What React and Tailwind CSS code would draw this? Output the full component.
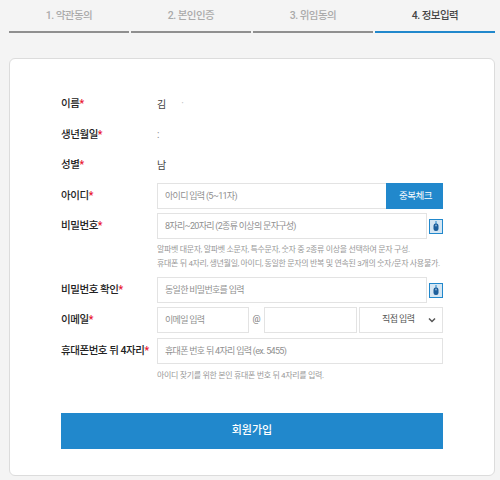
import React from 'react'

function Label({ text }) {
  return (
    <div className="w-[96px] shrink-0 text-[10.5px] tracking-[-0.45px] text-[#222] font-medium whitespace-nowrap">
      {text}
      <span className="text-[#e8102a]">*</span>
    </div>
  )
}

function TextInput({ placeholder, className = '' }) {
  return (
    <input
      placeholder={placeholder}
      className={`h-[26px] min-w-0 border border-[#e3e3e3] bg-white px-[7px] text-[9px] tracking-[-0.7px] outline-none placeholder:text-[#909090] ${className}`}
    />
  )
}

function MouseBtn() {
  return (
    <div className="ml-[2px] flex h-[15px] w-[14px] shrink-0 items-center justify-center border border-[#2188cc] bg-[#d5e6f3]">
      <svg width="8" height="11" viewBox="0 0 8 11">
        <path d="M4 0v3" stroke="#2188cc" strokeWidth="1" />
        <rect x="1.5" y="2.5" width="5" height="7.5" rx="2.2" fill="#1d5f9c" />
        <rect x="3.5" y="3.7" width="1" height="1.6" fill="#cfe3f3" />
      </svg>
    </div>
  )
}

export default function App() {
  const steps = ['1. 약관동의', '2. 본인인증', '3. 위임동의', '4. 정보입력']
  return (
    <div className="h-[480px] w-[500px] overflow-hidden bg-[#f4f4f4] px-[9px] pt-[6px] font-['Roboto','Noto_Sans_CJK_KR',sans-serif]">
      <div className="flex w-[486px] gap-[2px]">
        {steps.map((s, i) => (
          <div
            key={s}
            className={`h-[27px] w-[120.5px] border-b-[2px] pt-[2px] text-center text-[10.5px] font-medium leading-[15px] tracking-[-0.55px] ${
              i === 3 ? 'border-[#2188cc] text-[#444]' : 'border-[#8f8f8f] text-[#aaa]'
            }`}
          >
            {s}
          </div>
        ))}
      </div>

      <div className="mt-[25px] h-[418px] w-[486px] rounded-[6px] border border-[#dcdcdc] bg-white px-[51px] pt-[30px]">
        <div className="flex h-[30px] items-center">
          <Label text="이름" />
          <span className="text-[10px] text-[#444]">김</span>
          <span className="ml-[15px] text-[10px] leading-none text-[#bbb]">·</span>
        </div>
        <div className="flex h-[31px] items-center">
          <Label text="생년월일" />
          <span className="text-[10px] text-[#888]">:</span>
        </div>
        <div className="flex h-[30px] items-center">
          <Label text="성별" />
          <span className="text-[10px] text-[#444]">남</span>
        </div>

        <div className="mt-[3px] flex h-[26px] items-center">
          <Label text="아이디" />
          <TextInput placeholder="아이디 입력 (5~11자)" className="flex-1 border-r-0" />
          <button className="h-[26px] w-[57px] bg-[#2188cc] pl-[2px] text-[9.5px] tracking-[-0.5px] text-white">중복체크</button>
        </div>

        <div className="mt-[4px] flex h-[26px] items-center">
          <Label text="비밀번호" />
          <TextInput placeholder="8자리~20자리 (2종류 이상의 문자구성)" className="flex-1" />
          <MouseBtn />
        </div>
        <div className="ml-[96px] mt-[4px] h-[34px] text-[8px] leading-[14px] tracking-[-0.33px] whitespace-nowrap text-[#999]">
          <div>알파벳 대문자, 알파벳 소문자, 특수문자, 숫자 중 2종류 이상을 선택하여 문자 구성.</div>
          <div>휴대폰 뒤 4자리, 생년월일, 아이디, 동일한 문자의 반복 및 연속된 3개의 숫자/문자 사용불가.</div>
        </div>

        <div className="flex h-[26px] items-center">
          <Label text="비밀번호 확인" />
          <TextInput placeholder="동일한 비밀번호를 입력" className="flex-1" />
          <MouseBtn />
        </div>

        <div className="mt-[4px] flex h-[26px] items-center">
          <Label text="이메일" />
          <TextInput placeholder="이메일 입력" className="w-[92px]" />
          <span className="w-[15px] text-center text-[9px] text-[#777]">@</span>
          <TextInput className="w-[93px]" />
          <div className="ml-[2px] flex h-[26px] flex-1 items-center justify-between border border-[#e3e3e3] pl-[22px] pr-[6px] text-[9px] tracking-[-0.6px] text-[#555]">
            직접 입력
            <svg width="8" height="6" viewBox="0 0 8 6" fill="none">
              <path d="M1 1.5l3 3 3-3" stroke="#555" strokeWidth="1.5" />
            </svg>
          </div>
        </div>

        <div className="mt-[5px] flex h-[26px] items-center">
          <Label text="휴대폰번호 뒤 4자리" />
          <TextInput placeholder="휴대폰 번호 뒤 4자리 입력 (ex. 5455)" className="flex-1" />
        </div>
        <div className="ml-[96px] mt-[5px] text-[8px] leading-[14px] tracking-[-0.33px] text-[#999]">
          아이디 찾기를 위한 본인 휴대폰 번호 뒤 4자리를 입력.
        </div>

        <button className="mt-[30px] h-[36px] w-[382px] bg-[#2188cc] text-[11px] font-medium text-white">
          회원가입
        </button>
      </div>
    </div>
  )
}
